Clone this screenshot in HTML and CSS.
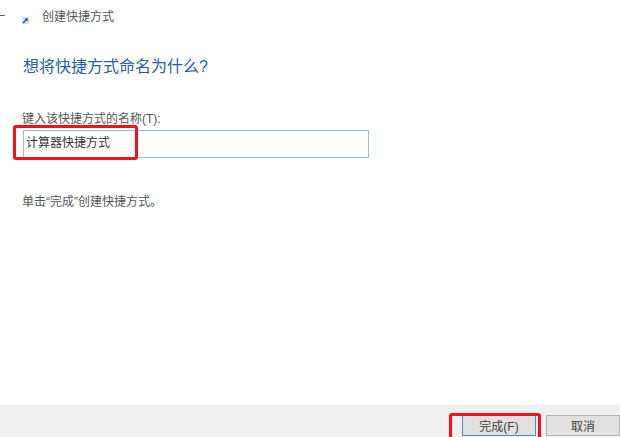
FILE: index.html
```html
<html>
<head>
    <meta charset="utf-8">
    <link rel="stylesheet" href="styles.css">
</head>
<body>
    <div class="wizard">
        <div class="titlebar">
            <span class="back"></span>
            <svg class="icon" width="7" height="7" viewBox="0 0 7 7">
                <rect x="0" y="0" width="7" height="7" fill="#d9dde6"/>
                <path d="M1 6 L5 2 M3 2 H5 V4" fill="none" stroke="#2f5fb0" stroke-width="1.4"/>
            </svg>
            <span class="title">创建快捷方式</span>
        </div>
        <main class="content">
            <h1>想将快捷方式命名为什么?</h1>
            <label class="name-label">键入该快捷方式的名称(T):</label>
            <div class="field">
                <input class="name-input" type="text" value="计算器快捷方式">
                <div class="mark mark-input"></div>
            </div>
            <p class="hint">单击“完成”创建快捷方式。</p>
        </main>
        <footer class="buttons">
            <div class="finish-wrap">
                <button class="btn btn-default">完成(F)</button>
                <div class="mark mark-finish"></div>
            </div>
            <button class="btn">取消</button>
        </footer>
    </div>
</body>
</html>
```

FILE: styles.css
```css
* {
    margin: 0;
    padding: 0;
    box-sizing: border-box;
}
html, body {
    height: 100%;
    overflow: hidden;
}
body {
    background-color: #fff;
    color: #333;
    font-family: "Liberation Sans", "Noto Sans CJK SC", sans-serif;
    font-size: 12px;
}
.wizard {
    height: 437px;
    display: flex;
    flex-direction: column;
}
.titlebar {
    height: 33px;
    display: flex;
    align-items: center;
    color: #555;
}
.back {
    width: 5px;
    height: 1px;
    margin-top: -3px;
    background-color: #666;
}
.icon {
    margin-left: 17px;
    margin-top: 7px;
}
.title {
    margin-left: 13px;
    line-height: 16px;
}
.content {
    flex: 1;
    padding-left: 23px;
}
h1 {
    margin-top: 24px;
    font-size: 16px;
    font-weight: normal;
    line-height: 20px;
    color: #2b5cab;
}
.name-label {
    display: block;
    margin-top: 34px;
    margin-left: -1px;
    line-height: 16px;
    color: #555;
}
.field {
    position: relative;
    width: 346px;
    margin-top: 3px;
}
.name-input {
    display: block;
    width: 100%;
    height: 28px;
    padding-left: 2px;
    padding-bottom: 5px;
    border: 1px solid #8fc1ea;
    outline: none;
    font: inherit;
    color: #333;
}
.mark {
    position: absolute;
    border: 3px solid #f01414;
    border-radius: 3px;
}
.mark-input {
    left: -10px;
    top: -5px;
    width: 125px;
    height: 35px;
}
.hint {
    margin-top: 36px;
    margin-left: -1px;
    line-height: 16px;
    color: #555;
}
.buttons {
    height: 32px;
    padding-top: 10px;
    display: flex;
    justify-content: flex-end;
    gap: 10px;
    background-color: #f0f0f0;
}
.finish-wrap {
    position: relative;
}
.btn {
    display: block;
    width: 74px;
    height: 21px;
    border: 1px solid #b5b5b5;
    background-color: #e1e1e1;
    font: inherit;
    color: #444;
}
.btn-default {
    border: 1px solid #3f8fd8;
}
.mark-finish {
    left: -13px;
    top: -2px;
    width: 92px;
    height: 30px;
}
```
